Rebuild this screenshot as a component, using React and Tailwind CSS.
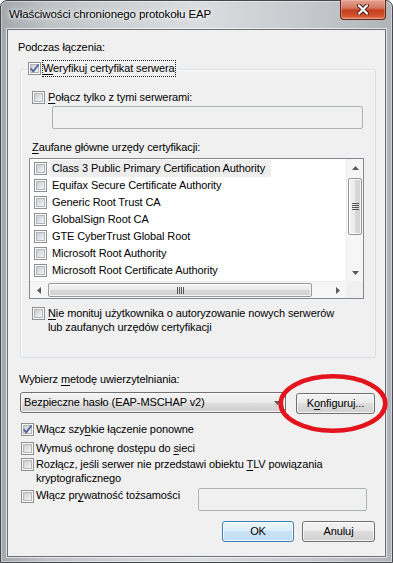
import { useId } from "react";
import clsx from "clsx";

function Checkbox({ checked }) {
  const raw = useId();
  const id = "cb" + raw.replace(/[^a-zA-Z0-9]/g, "");
  return (
    <svg width="13" height="13" viewBox="0 0 13 13" className="shrink-0">
      <defs>
        <linearGradient id={id} x1="0" y1="0" x2="1" y2="1">
          <stop offset="0" stopColor="#c6cad0" />
          <stop offset="1" stopColor="#f7f7f7" />
        </linearGradient>
      </defs>
      <rect x="0.5" y="0.5" width="12" height="12" fill="#fcfcfc" stroke="#8e8f8f" />
      <rect x="2.5" y="2.5" width="8" height="8" fill={`url(#${id})`} stroke="#b2b6bb" />
      {checked && (
        <path d="M2.6 6.3 L5.2 9.3 L10.6 2.4" stroke="#4b5c97" strokeWidth="1.7" fill="none" />
      )}
    </svg>
  );
}

function U({ children }) {
  return <span className="underline underline-offset-[2px] decoration-[1px]">{children}</span>;
}

function WinButton({ children, className, primary }) {
  return (
    <button
      className={clsx(
        "h-[21px] rounded-[3px] border flex items-center justify-center leading-[15px] shadow-[inset_0_0_0_1px_rgba(255,255,255,0.75)]",
        primary
          ? "border-[#3c7fb1] bg-[linear-gradient(to_bottom,#ecf6fd,#dcedf9_50%,#c9e3f5_50%,#bfdcf2)]"
          : "border-[#707070] bg-[linear-gradient(to_bottom,#f3f3f3,#ebebeb_50%,#dddddd_50%,#d0d0d0)]",
        className
      )}
    >
      {children}
    </button>
  );
}

function Arrow({ dir }) {
  const d = {
    up: "M0 4 L3.5 0 L7 4 Z",
    down: "M0 0 L3.5 4 L7 0 Z",
    left: "M4 0 L0 3.5 L4 7 Z",
    right: "M0 0 L4 3.5 L0 7 Z",
  }[dir];
  const vertical = dir === "up" || dir === "down";
  return (
    <svg width={vertical ? 7 : 4} height={vertical ? 4 : 7} viewBox={vertical ? "0 0 7 4" : "0 0 4 7"}>
      <path d={d} fill="#5a5a5a" />
    </svg>
  );
}

const certs = [
  "Class 3 Public Primary Certification Authority",
  "Equifax Secure Certificate Authority",
  "Generic Root Trust CA",
  "GlobalSign Root CA",
  "GTE CyberTrust Global Root",
  "Microsoft Root Authority",
  "Microsoft Root Certificate Authority",
];

function CertList() {
  return (
    <div className="mt-[3px] ml-[8px] w-[335px] h-[141px] border border-[#828790] bg-white grid grid-cols-[1fr_17px] grid-rows-[1fr_17px]">
      <div className="pt-[1px] overflow-hidden">
        {certs.map((c, i) => (
          <div key={c} className="h-[17px] flex items-center">
            <span className="ml-[4px] flex">
              <Checkbox />
            </span>
            <span
              className={clsx(
                "ml-[3px] pl-[2px] pr-[6px] h-[17px] flex items-center whitespace-nowrap",
                i === 0 && "bg-[#eeeeee]"
              )}
            >
              {c}
            </span>
          </div>
        ))}
      </div>
      {/* vertical scrollbar */}
      <div className="flex flex-col bg-[#f6f6f6] border-l border-[#ececec]">
        <div className="h-[17px] flex items-center justify-center">
          <Arrow dir="up" />
        </div>
        <div className="mt-[2px] mx-[1px] h-[57px] rounded-[2px] border border-[#979797] bg-[linear-gradient(to_right,#f4f4f4,#e9e9e9_50%,#d9d9d9_50%,#d2d2d2)] shadow-[inset_0_0_0_1px_rgba(255,255,255,0.8)] flex flex-col items-center justify-center gap-[1px]">
          <div className="w-[7px] h-[1px] bg-[#555]" />
          <div className="w-[7px] h-[1px] bg-[#555]" />
          <div className="w-[7px] h-[1px] bg-[#555]" />
          <div className="w-[7px] h-[1px] bg-[#555]" />
        </div>
        <div className="flex-1" />
        <div className="h-[17px] flex items-center justify-center">
          <Arrow dir="down" />
        </div>
      </div>
      {/* horizontal scrollbar */}
      <div className="flex bg-[#f6f6f6] border-t border-[#ececec]">
        <div className="w-[17px] flex items-center justify-center">
          <Arrow dir="left" />
        </div>
        <div className="ml-[1px] my-[1px] w-[264px] rounded-[2px] border border-[#979797] bg-[linear-gradient(to_bottom,#f4f4f4,#e9e9e9_50%,#d9d9d9_50%,#d2d2d2)] shadow-[inset_0_0_0_1px_rgba(255,255,255,0.8)] flex items-center justify-center gap-[1px]">
          <div className="w-[1px] h-[7px] bg-[#555]" />
          <div className="w-[1px] h-[7px] bg-[#555]" />
          <div className="w-[1px] h-[7px] bg-[#555]" />
          <div className="w-[1px] h-[7px] bg-[#555]" />
        </div>
        <div className="flex-1" />
        <div className="w-[17px] flex items-center justify-center">
          <Arrow dir="right" />
        </div>
      </div>
      <div className="bg-[#f0f0f0]" />
    </div>
  );
}

export default function App() {
  return (
    <div className="relative w-[393px] h-[563px] overflow-hidden font-['Liberation_Sans',Arial,sans-serif] text-[11px] tracking-[-0.1px] text-black">
      <div className="h-full flex flex-col rounded-t-[7px] border border-[#45494d] px-[5px] pb-[4px] bg-[linear-gradient(to_right,#a3a8ad_0%,#bfc3c7_12%,#d2d5d8_35%,#dbdddf_50%,#c8cbcf_75%,#b1b5b9_100%)] shadow-[inset_0_0_0_1px_rgba(255,255,255,0.4)]">
        {/* title bar */}
        <div className="h-[27px] flex items-start justify-between">
          <div className="pl-[3px] pt-[6px] leading-[15px] text-[11.5px] [text-shadow:0_0_6px_#fff,0_0_3px_#fff]">
            Właściwości chronionego protokołu EAP
          </div>
          <div className="-mt-[1px] mr-[1px] w-[46px] h-[20px] rounded-b-[4px] border border-t-0 border-[#5b2a20] bg-[linear-gradient(to_bottom,#e4a491,#d47a66_40%,#c53e1f_55%,#d3552f_85%,#e9876a)] shadow-[inset_0_0_0_1px_rgba(255,200,180,0.35)] flex items-center justify-center">
            <svg width="12" height="11" viewBox="0 0 12 11">
              <path d="M2 1.5 L10 9.5 M10 1.5 L2 9.5" stroke="#4a2018" strokeWidth="4" strokeLinecap="round" />
              <path d="M2 1.5 L10 9.5 M10 1.5 L2 9.5" stroke="#ffffff" strokeWidth="2.2" strokeLinecap="round" />
            </svg>
          </div>
        </div>

        {/* client area */}
        <div className="flex-1 flex border border-white/60">
          <div className="flex-1 flex flex-col border border-[#6d7175] bg-[#f0f0f0]">
            <div className="pt-[10px] pl-[10px] leading-[15px]">Podczas łączenia:</div>

            <div className="mt-[14px] ml-[12px] w-[356px] flex flex-col pb-[23px] rounded-[3px] border border-[#d5dfe5] shadow-[inset_1px_1px_0_#ffffff]">
              <div className="-mt-[10px] ml-[6px] self-start h-[17px] flex items-center bg-[#f0f0f0] pl-[1px] pr-[2px]">
                <Checkbox checked />
                <span className="ml-[1px] h-[17px] leading-[15px] border border-dotted border-[#222] pr-[1px]">
                  <U>W</U>eryfikuj certyfikat serwera
                </span>
              </div>

              <div className="mt-[13px] ml-[11px] h-[15px] flex items-center leading-[15px]">
                <Checkbox />
                <span className="ml-[3px]">
                  <U>P</U>ołącz tylko z tymi serwerami:
                </span>
              </div>
              <div className="mt-[1px] ml-[31px] w-[311px] h-[23px] rounded-[2px] border border-[#adb2b5] bg-[#f0f0f0]" />

              <div className="mt-[11px] ml-[11px] leading-[15px]">
                <U>Z</U>aufane główne urzędy certyfikacji:
              </div>
              <CertList />

              <div className="mt-[7px] ml-[11px] flex items-start">
                <span className="mt-[1px] flex">
                  <Checkbox />
                </span>
                <span className="ml-[3px] leading-[14px]">
                  <U>N</U>ie monituj użytkownika o autoryzowanie nowych serwerów
                  <br />
                  lub zaufanych urzędów certyfikacji
                </span>
              </div>
            </div>

            <div className="mt-[14px] ml-[11px] leading-[15px]">
              Wybierz <U>m</U>etodę uwierzytelniania:
            </div>
            <div className="mt-[5px] ml-[12px] flex items-start">
              <div className="w-[266px] h-[21px] rounded-[3px] border border-[#707070] bg-[linear-gradient(to_bottom,#f3f3f3,#ebebeb_50%,#dddddd_50%,#d0d0d0)] shadow-[inset_0_0_0_1px_rgba(255,255,255,0.75)] flex items-center justify-between pl-[3px] pr-[4px] leading-[15px]">
                <span>Bezpieczne hasło (EAP-MSCHAP v2)</span>
                <Arrow dir="down" />
              </div>
              <WinButton className="ml-[10px] mt-[1px] w-[79px]">
                K<U>o</U>nfiguruj...
              </WinButton>
            </div>

            <div className="mt-[8px] ml-[13px] flex items-start">
              <span className="mt-[1px] flex">
                <Checkbox checked />
              </span>
              <span className="ml-[2px] leading-[14px]">
                Włącz szy<U>b</U>kie łączenie ponowne
              </span>
            </div>
            <div className="mt-[5px] ml-[13px] flex items-start">
              <span className="mt-[1px] flex">
                <Checkbox />
              </span>
              <span className="ml-[2px] leading-[14px]">
                Wymuś ochronę dostępu do <U>s</U>ieci
              </span>
            </div>
            <div className="mt-[2px] ml-[13px] flex items-start">
              <span className="mt-[1px] flex">
                <Checkbox />
              </span>
              <span className="ml-[2px] leading-[14px]">
                Rozłącz, jeśli serwer nie przedstawi obiektu <U>T</U>LV powiązania
                <br />
                kryptograficznego
              </span>
            </div>
            <div className="mt-[3px] ml-[13px] pr-[18px] flex items-start">
              <div className="flex-1 flex items-start">
                <span className="mt-[2px] flex">
                  <Checkbox />
                </span>
                <span className="ml-[2px] leading-[14px]">
                  Włącz pr<U>y</U>watność tożsamości
                </span>
              </div>
              <div className="w-[169px] h-[23px] rounded-[2px] border border-[#adb2b5] bg-[#f0f0f0]" />
            </div>

            <div className="mt-[10px] pr-[10px] flex justify-end gap-[8px]">
              <WinButton primary className="w-[72px]">
                OK
              </WinButton>
              <WinButton className="w-[73px]">Anuluj</WinButton>
            </div>
          </div>
        </div>
      </div>

      {/* red annotation ellipse */}
      <svg className="absolute left-[276px] top-[372px]" width="114" height="64" viewBox="0 0 114 64">
        <ellipse cx="57" cy="31.5" rx="52.3" ry="27.3" fill="none" stroke="#e3141d" strokeWidth="4.6" />
      </svg>
    </div>
  );
}
